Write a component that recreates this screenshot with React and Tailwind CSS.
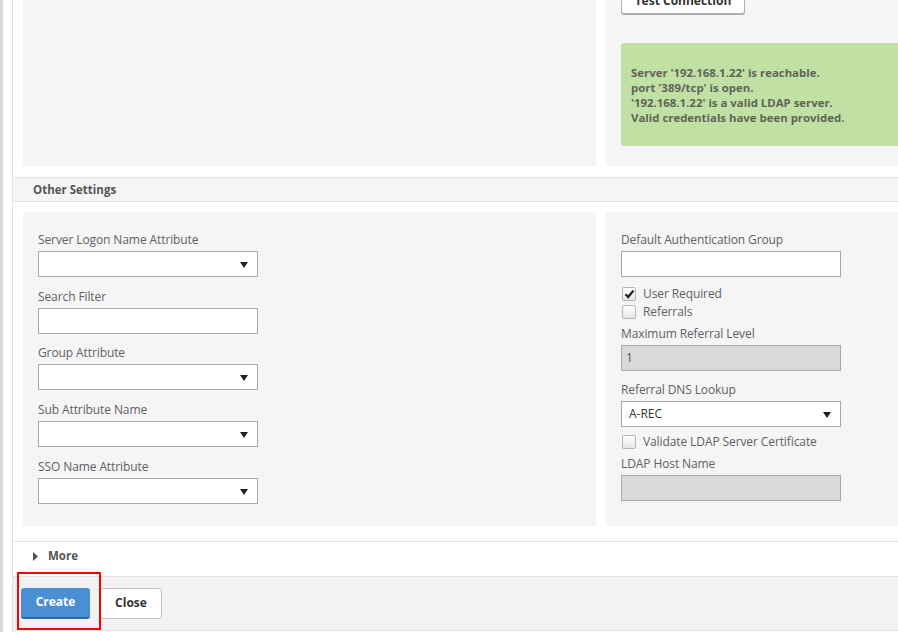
import React from "react";

const font = { fontFamily: '"Open Sans", "Liberation Sans", sans-serif' };

function Caret() {
  return (
    <svg width="8" height="8" viewBox="0 0 8 8" className="absolute right-[9px] top-[9px]">
      <path d="M0 1 H8 L4 7 Z" fill="#222" />
    </svg>
  );
}

function Select({ value }) {
  return (
    <div className="relative w-[220px] h-[26px] bg-white border border-[#a9a9a9] text-[12px] text-[#333] pl-[7px] leading-[24px]">
      {value}
      <Caret />
    </div>
  );
}

function Input({ disabled, value }) {
  return (
    <div
      className={
        "w-[220px] h-[26px] border border-[#a9a9a9] text-[12px] text-[#555] pl-[3px] leading-[24px] " +
        (disabled ? "bg-[#d9d9d9]" : "bg-white")
      }
    >
      {value}
    </div>
  );
}

function Field({ label, children }) {
  return (
    <div className="flex flex-col">
      <div className="text-[12px] text-[#5f5f66] leading-[16px] mb-[3px] tracking-[-0.1px]">{label}</div>
      {children}
    </div>
  );
}

function Check({ checked, label }) {
  return (
    <div className="flex items-center h-[18px]">
      <div className="w-[14px] h-[14px] ml-[1px] rounded-[2px] border border-[#b5b5b5] bg-gradient-to-b from-[#ffffff] to-[#e6e6e6] flex items-center justify-center">
        {checked && (
          <svg width="11" height="10" viewBox="0 0 11 10">
            <path d="M1.5 5.2 L4.2 8 L9.5 1.5" stroke="#222" strokeWidth="2.2" fill="none" />
          </svg>
        )}
      </div>
      <span className="ml-[7px] text-[12px] text-[#5f5f66] tracking-[-0.1px]">{label}</span>
    </div>
  );
}

export default function App() {
  return (
    <div style={font} className="w-[898px] h-[632px] bg-white overflow-hidden flex">
      <div className="w-[3px] bg-[#d9d9d9] shrink-0" />
      <div className="w-[9px] shrink-0" />
      <div className="flex-1 border-l border-[#e2e2e2] flex flex-col min-w-0">
        {/* top panels */}
        <div className="flex h-[166px] pl-[10px] gap-[10px] shrink-0">
          <div className="w-[573px] bg-[#f5f5f5]" />
          <div className="flex-1 bg-[#f5f5f5] pl-[15px] relative">
            <div className="absolute left-[15px] top-[-13px] w-[124px] h-[27px] bg-white border border-[#b3b3b3] rounded-[3px] text-[12px] font-bold text-[#333] flex items-center justify-center shadow-[0_1px_0_#aaa]">
              Test Connection
            </div>
            <div className="mt-[43px] h-[103px] bg-[#c1e1a4] rounded-l-[3px] pl-[10px] pt-[22px] text-[11.4px] leading-[15px] font-bold text-[#5e6459]">
              <div>Server '192.168.1.22' is reachable.</div>
              <div>port '389/tcp' is open.</div>
              <div>'192.168.1.22' is a valid LDAP server.</div>
              <div>Valid credentials have been provided.</div>
            </div>
          </div>
        </div>
        <div className="h-[11px] shrink-0" />
        {/* header */}
        <div className="h-[25px] shrink-0 border-y border-[#e2e2e2] bg-[#f5f5f5] flex items-center pl-[20px] text-[11.5px] font-bold text-[#555]">
          Other Settings
        </div>
        <div className="h-[10px] shrink-0" />
        {/* settings panels */}
        <div className="flex h-[314px] shrink-0 pl-[10px] gap-[10px]">
          <div className="w-[573px] bg-[#f5f5f5] pl-[15px] pt-[20px] flex flex-col gap-[11.7px]">
            <Field label="Server Logon Name Attribute"><Select /></Field>
            <Field label="Search Filter"><Input /></Field>
            <Field label="Group Attribute"><Select /></Field>
            <Field label="Sub Attribute Name"><Select /></Field>
            <Field label="SSO Name Attribute"><Select /></Field>
          </div>
          <div className="flex-1 bg-[#f5f5f5] pl-[15px] pt-[20px] flex flex-col">
            <Field label="Default Authentication Group"><Input /></Field>
            <div className="mt-[8px]"><Check checked label="User Required" /></div>
            <div className="mt-[0px]"><Check label="Referrals" /></div>
            <div className="mt-[5px]">
              <Field label="Maximum Referral Level"><Input disabled value={<span className="pl-[1px]">1</span>} /></Field>
            </div>
            <div className="mt-[11px]">
              <Field label="Referral DNS Lookup"><Select value="A-REC" /></Field>
            </div>
            <div className="mt-[6px]"><Check label="Validate LDAP Server Certificate" /></div>
            <div className="mt-[5px]">
              <Field label="LDAP Host Name"><Input disabled /></Field>
            </div>
          </div>
        </div>
        <div className="h-[15px] shrink-0" />
        {/* More */}
        <div className="h-[36px] shrink-0 border-y border-[#e2e2e2] flex items-center pl-[20px] pb-[6px]">
          <svg width="5" height="9" viewBox="0 0 5 9"><path d="M0 0 L5 4.5 L0 9 Z" fill="#555" /></svg>
          <span className="ml-[10px] text-[11.5px] font-bold text-[#555]">More</span>
        </div>
        {/* footer */}
        <div className="h-[54px] shrink-0 bg-[#f2f2f2] border-b border-[#e2e2e2] relative flex items-center pl-[8px] gap-[10px]">
          <div className="absolute left-[4px] top-[-5px] w-[84px] h-[58px] border-2 border-[#ff0000]" />
          <div className="w-[69px] h-[31px] mt-[-1px] rounded-[3px] bg-[#4a8fd3] border-b-2 border-[#2e6aa6] text-white text-[12px] font-bold flex items-center justify-center">
            Create
          </div>
          <div className="w-[62px] h-[31px] mt-[-1px] rounded-[3px] bg-white border border-[#c3c3c3] text-[#333] text-[12px] font-bold flex items-center justify-center">
            Close
          </div>
        </div>
      </div>
    </div>
  );
}
